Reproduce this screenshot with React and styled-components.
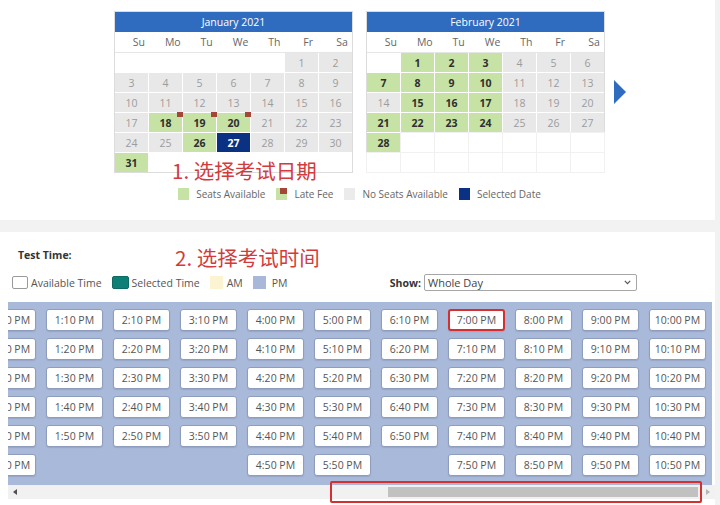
import React, { useLayoutEffect, useRef } from "react";
import styled, { createGlobalStyle, css } from "styled-components";

const GlobalStyle = createGlobalStyle`
  html, body {
    margin: 0;
    padding: 0;
  }
  body {
    width: 720px;
    height: 505px;
    overflow: hidden;
    background: #f2f2f2;
    font-family: "Open Sans", "Noto Sans CJK SC", sans-serif;
  }
`;

const Page = styled.div`
  width: 720px;
  height: 505px;
  display: flex;
  flex-direction: column;
  gap: 12px;
`;

/* ---------- date panel ---------- */

const DatePanel = styled.section`
  position: relative;
  width: 715px;
  height: 220px;
  box-sizing: border-box;
  padding: 11px 0 0 4px;
  background: #fff;
`;

const CalendarRow = styled.div`
  display: grid;
  grid-template-columns: 1fr 239px 239px 1fr;
  column-gap: 13px;
  align-items: center;
`;

const Calendar = styled.div`
  border: 1px solid #dcdcdc;
  background: #fff;
  &:first-child {
    grid-column: 2;
  }
`;

const MonthTitle = styled.div`
  height: 20px;
  line-height: 20px;
  background: #2f6cc0;
  color: #fff;
  font-size: 10.5px;
  text-align: center;
`;

const WeekDays = styled.div`
  display: grid;
  grid-template-columns: repeat(7, 1fr);
  height: 20px;
  align-items: center;
  border-bottom: 1px solid #e6e6e6;
  font-size: 10.5px;
  color: #666;
  span {
    padding-left: 14px;
    text-align: center;
  }
`;

const DayGrid = styled.div`
  display: grid;
  grid-template-columns: repeat(7, 1fr);
  grid-auto-rows: 19px;
  gap: 1px;
  background: #fff;
`;

const dayStatus = {
  empty: css`
    background: #fff;
  `,
  blank: css`
    background: #fff;
    box-shadow: 0 0 0 1px #f1f1f1;
  `,
  none: css`
    background: #e8e8e8;
    color: #9c9c9c;
  `,
  open: css`
    background: #c6e3a5;
    color: #2f2f2f;
    font-weight: 700;
  `,
  selected: css`
    background: #0b3182;
    color: #fff;
    font-weight: 700;
  `,
};

const Day = styled.div`
  position: relative;
  display: flex;
  align-items: center;
  justify-content: center;
  font-size: 10.5px;
  ${(p) => dayStatus[p.status]}
`;

const LateMark = styled.span`
  position: absolute;
  top: -1px;
  right: -1px;
  width: 6px;
  height: 5px;
  background: #a4473a;
`;

const NextArrow = styled.svg`
  margin-left: -4px;
  justify-self: start;
`;

const DateLegend = styled.div`
  display: flex;
  justify-content: center;
  align-items: center;
  gap: 11px;
  margin-top: 14px;
  font-size: 10px;
  color: #666;
`;

const LegendItem = styled.div`
  display: flex;
  align-items: center;
  gap: ${(p) => p.gap || 7}px;
`;

const Swatch = styled.span`
  position: relative;
  width: ${(p) => p.w || 11}px;
  height: ${(p) => p.h || 12}px;
  box-sizing: border-box;
  background: ${(p) => p.color};
  border: ${(p) => (p.outline ? `1px solid ${p.outline}` : "none")};
  border-radius: ${(p) => p.radius || 0}px;
`;

const SwatchCorner = styled.span`
  position: absolute;
  top: 0;
  right: 0;
  width: 7px;
  height: 6px;
  background: #a4473a;
`;

const Note = styled.div`
  position: absolute;
  left: ${(p) => p.left}px;
  top: ${(p) => p.top}px;
  font-family: "Noto Sans CJK SC", "Open Sans", sans-serif;
  font-size: 20.5px;
  line-height: 20px;
  color: #d23b3b;
  white-space: nowrap;
`;

/* ---------- time panel ---------- */

const TimePanel = styled.section`
  position: relative;
  flex: 1;
  width: 715px;
  box-sizing: border-box;
  padding-top: 16px;
  background: #fff;
`;

const PanelTitle = styled.div`
  margin-left: 18px;
  font-size: 10.5px;
  line-height: 14px;
  font-weight: 700;
  color: #333;
`;

const Controls = styled.div`
  display: flex;
  align-items: center;
  margin-top: 12px;
  padding: 0 78px 0 12px;
  height: 17px;
`;

const TimeLegend = styled.div`
  display: flex;
  align-items: center;
  gap: 10px;
  font-size: 10.5px;
  color: #555;
`;

const ShowGroup = styled.div`
  display: flex;
  align-items: center;
  gap: 3px;
  margin-left: auto;
  font-size: 10.5px;
  label {
    font-weight: 700;
    color: #333;
  }
`;

const Select = styled.div`
  position: relative;
  width: 213px;
  height: 17px;
  box-sizing: border-box;
  padding-left: 3px;
  border: 1px solid #a6a6a6;
  border-radius: 2px;
  font-size: 11px;
  line-height: 15px;
  color: #444;
  svg {
    position: absolute;
    right: 5px;
    top: 5px;
  }
`;

const Scroller = styled.div`
  margin: 11px 0 0 8px;
  width: 704px;
  height: 183px;
  overflow: hidden;
  background: #a9b9d9;
`;

const SlotTrack = styled.div`
  display: flex;
  gap: 10px;
  width: max-content;
  padding: 7px 6px 0 10px;
`;

const SlotColumn = styled.div`
  display: flex;
  flex-direction: column;
  gap: 7px;
`;

const Slot = styled.div`
  width: 57px;
  height: 22px;
  box-sizing: border-box;
  display: flex;
  align-items: center;
  justify-content: center;
  background: #fff;
  border: ${(p) => (p.marked ? "2px solid #d62f2f" : "1px solid #8e9dbb")};
  border-radius: 3px;
  box-shadow: 0 1px 1px rgba(40, 60, 100, 0.15);
  font-size: 10.5px;
  color: #555;
  white-space: nowrap;
`;

const ScrollBar = styled.div`
  display: flex;
  align-items: center;
  margin-left: 8px;
  width: 707px;
  height: 14px;
  background: #f1f1f1;
`;

const ScrollArrow = styled.span`
  width: 14px;
  display: flex;
  justify-content: center;
  ${(p) => p.end && "margin-left: auto;"}
`;

const Thumb = styled.span`
  margin-left: 366px;
  width: 310px;
  height: 10px;
  background: #c1c1c1;
`;

const RedFrame = styled.div`
  position: absolute;
  left: 330px;
  top: 249px;
  width: 372px;
  height: 22px;
  box-sizing: border-box;
  border: 2px solid #d62f2f;
  border-radius: 2px;
`;

/* ---------- data ---------- */

const WEEK = ["Su", "Mo", "Tu", "We", "Th", "Fr", "Sa"];
const E = { status: "empty" };
const B = { status: "blank" };
const n = (d) => ({ d, status: "none" });
const o = (d, late) => ({ d, status: "open", late });

const january = [
  E, E, E, E, E, n(1), n(2),
  n(3), n(4), n(5), n(6), n(7), n(8), n(9),
  n(10), n(11), n(12), n(13), n(14), n(15), n(16),
  n(17), o(18, true), o(19, true), o(20, true), n(21), n(22), n(23),
  n(24), n(25), o(26), { d: 27, status: "selected" }, n(28), n(29), n(30),
  o(31), E, E, E, E, E, E,
];

const february = [
  E, o(1), o(2), o(3), n(4), n(5), n(6),
  o(7), o(8), o(9), o(10), n(11), n(12), n(13),
  n(14), o(15), o(16), o(17), n(18), n(19), n(20),
  o(21), o(22), o(23), o(24), n(25), n(26), n(27),
  o(28), B, B, B, B, B, B,
  B, B, B, B, B, B, B,
];

const ALL = [0, 10, 20, 30, 40, 50];
const LATE = [10, 20, 30, 40, 50];
const hours = [
  [12, ALL], [1, LATE], [2, LATE], [3, LATE], [4, ALL], [5, ALL],
  [6, LATE], [7, ALL], [8, ALL], [9, ALL], [10, ALL],
];

const MonthCalendar = ({ title, days }) => (
  <Calendar>
    <MonthTitle>{title}</MonthTitle>
    <WeekDays>
      {WEEK.map((w) => (
        <span key={w}>{w}</span>
      ))}
    </WeekDays>
    <DayGrid>
      {days.map((day, i) => (
        <Day key={i} status={day.status}>
          {day.d}
          {day.late && <LateMark />}
        </Day>
      ))}
    </DayGrid>
  </Calendar>
);

const Chevron = () => (
  <svg width="7" height="5" viewBox="0 0 7 5">
    <path d="M0.8 0.8 L3.5 3.6 L6.2 0.8" fill="none" stroke="#555" strokeWidth="1.2" />
  </svg>
);

export default function App() {
  const scrollRef = useRef(null);

  useLayoutEffect(() => {
    const el = scrollRef.current;
    if (el) el.scrollLeft = el.scrollWidth - el.clientWidth;
  }, []);

  return (
    <Page>
      <GlobalStyle />
      <DatePanel>
        <CalendarRow>
          <MonthCalendar title="January 2021" days={january} />
          <MonthCalendar title="February 2021" days={february} />
          <NextArrow width="12" height="24" viewBox="0 0 12 24">
            <path d="M0 0 L12 12 L0 24 Z" fill="#2f6cc0" />
          </NextArrow>
        </CalendarRow>
        <DateLegend>
          <LegendItem>
            <Swatch color="#c6e3a5" />
            Seats Available
          </LegendItem>
          <LegendItem>
            <Swatch color="#c6e3a5">
              <SwatchCorner />
            </Swatch>
            Late Fee
          </LegendItem>
          <LegendItem>
            <Swatch color="#ebebeb" />
            No Seats Available
          </LegendItem>
          <LegendItem>
            <Swatch color="#0b3182" />
            Selected Date
          </LegendItem>
        </DateLegend>
        <Note left={172} top={160}>1. 选择考试日期</Note>
      </DatePanel>

      <TimePanel>
        <PanelTitle>Test Time:</PanelTitle>
        <Controls>
          <TimeLegend>
            <LegendItem gap={3}>
              <Swatch w={16} h={13} radius={2} color="#fff" outline="#9a9a9a" />
              Available Time
            </LegendItem>
            <LegendItem gap={3}>
              <Swatch w={17} h={13} radius={2} color="#0e7f76" outline="#0b6a62" />
              Selected Time
            </LegendItem>
            <LegendItem gap={4}>
              <Swatch w={13} h={13} color="#fcf3d2" />
              AM
            </LegendItem>
            <LegendItem gap={6}>
              <Swatch w={13} h={13} color="#a9b8d8" />
              PM
            </LegendItem>
          </TimeLegend>
          <ShowGroup>
            <label>Show:</label>
            <Select>
              Whole Day
              <Chevron />
            </Select>
          </ShowGroup>
        </Controls>

        <Scroller ref={scrollRef}>
          <SlotTrack>
            {hours.map(([h, mins]) => (
              <SlotColumn key={h}>
                {mins.map((m) => (
                  <Slot key={m} marked={h === 7 && m === 0}>
                    {`${h}:${String(m).padStart(2, "0")} PM`}
                  </Slot>
                ))}
              </SlotColumn>
            ))}
          </SlotTrack>
        </Scroller>
        <ScrollBar>
          <ScrollArrow>
            <svg width="4" height="6" viewBox="0 0 4 6">
              <path d="M4 0 L0 3 L4 6 Z" fill="#505050" />
            </svg>
          </ScrollArrow>
          <Thumb />
          <ScrollArrow end>
            <svg width="4" height="6" viewBox="0 0 4 6">
              <path d="M0 0 L4 3 L0 6 Z" fill="#b5b5b5" />
            </svg>
          </ScrollArrow>
        </ScrollBar>
        <Note left={175} top={15}>2. 选择考试时间</Note>
        <RedFrame />
      </TimePanel>
    </Page>
  );
}
